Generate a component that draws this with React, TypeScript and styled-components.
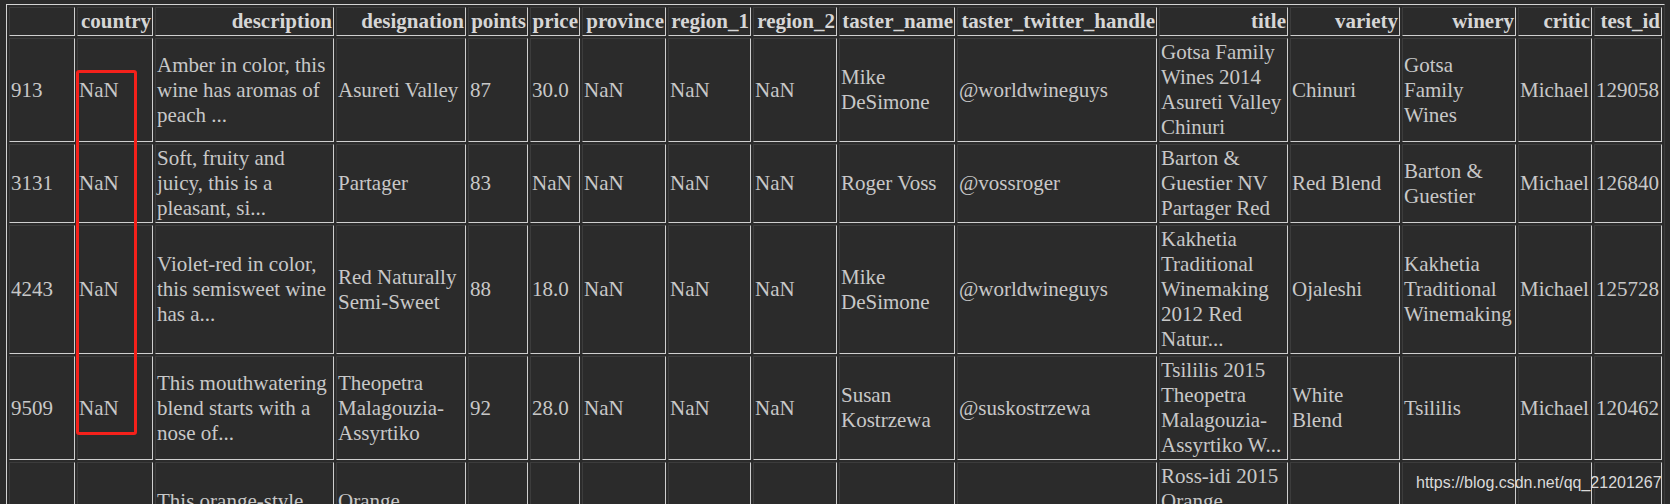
import React from 'react'
import styled, { createGlobalStyle } from 'styled-components'

const GlobalStyle = createGlobalStyle`
  html, body {
    margin: 0;
    background: #2b2b2b;
  }
`

const Frame = styled.div`
  position: relative;
  box-sizing: border-box;
  width: 1670px;
  height: 504px;
  padding: 4px 0 0 6px;
  overflow: hidden;
  background: #2b2b2b;
`

const Table = styled.table`
  width: 1659px;
  table-layout: fixed;
  border-collapse: separate;
  border-spacing: 2px;
  border: 1px solid;
  border-color: #d4d4d4 #3a3a3a #3a3a3a #d4d4d4;
  font-family: 'Liberation Serif', 'Times New Roman', serif;
  font-size: 21px;
  line-height: 25px;
  color: #c8c8c8;
`

const cellBorder = `
  padding: 1px;
  border: 1px solid;
  border-color: #3c3c3c #cfcfcf #cfcfcf #3c3c3c;
  vertical-align: middle;
  overflow: hidden;
`

const HeadCell = styled.th<{ $w: number }>`
  ${cellBorder}
  width: ${(p) => p.$w}px;
  text-align: right;
  font-weight: bold;
  color: #d6d6d6;
  white-space: nowrap;
`

const IndexCell = styled.th`
  ${cellBorder}
  text-align: left;
  font-weight: normal;
`

const Cell = styled.td`
  ${cellBorder}
  text-align: left;
`

// hand-drawn annotation over the country column
const Marker = styled.div`
  position: absolute;
  left: 76px;
  top: 70px;
  width: 61px;
  height: 365px;
  box-sizing: border-box;
  border: 3px solid #f5211b;
  border-radius: 3px;
`

const Watermark = styled.div`
  position: absolute;
  left: 1416px;
  top: 474px;
  font-family: 'Liberation Sans', Arial, sans-serif;
  font-size: 16px;
  line-height: 18px;
  color: #dadada;
  white-space: nowrap;
`

const columns: [string, number][] = [
  ['', 62],
  ['country', 72],
  ['description', 175],
  ['designation', 126],
  ['points', 56],
  ['price', 46],
  ['province', 80],
  ['region_1', 79],
  ['region_2', 80],
  ['taster_name', 112],
  ['taster_twitter_handle', 196],
  ['title', 125],
  ['variety', 106],
  ['winery', 110],
  ['critic', 70],
  ['test_id', 64],
]

const rows: string[][] = [
  [
    '913', 'NaN', 'Amber in color, this wine has aromas of peach ...', 'Asureti Valley', '87', '30.0',
    'NaN', 'NaN', 'NaN', 'Mike DeSimone', '@worldwineguys',
    'Gotsa Family Wines 2014 Asureti Valley Chinuri', 'Chinuri', 'Gotsa Family Wines', 'Michael', '129058',
  ],
  [
    '3131', 'NaN', 'Soft, fruity and juicy, this is a pleasant, si...', 'Partager', '83', 'NaN',
    'NaN', 'NaN', 'NaN', 'Roger Voss', '@vossroger',
    'Barton & Guestier NV Partager Red', 'Red Blend', 'Barton & Guestier', 'Michael', '126840',
  ],
  [
    '4243', 'NaN', 'Violet-red in color, this semisweet wine has a...', 'Red Naturally Semi-Sweet', '88', '18.0',
    'NaN', 'NaN', 'NaN', 'Mike DeSimone', '@worldwineguys',
    'Kakhetia Traditional Winemaking 2012 Red Natur...', 'Ojaleshi', 'Kakhetia Traditional Winemaking', 'Michael', '125728',
  ],
  [
    '9509', 'NaN', 'This mouthwatering blend starts with a nose of...', 'Theopetra Malagouzia-Assyrtiko', '92', '28.0',
    'NaN', 'NaN', 'NaN', 'Susan Kostrzewa', '@suskostrzewa',
    'Tsililis 2015 Theopetra Malagouzia-Assyrtiko W...', 'White Blend', 'Tsililis', 'Michael', '120462',
  ],
  [
    '10196', 'NaN', 'This orange-style wine offers aromas of apricot...', 'Orange Rkatsiteli-Mtsvane', '89', '15.0',
    'NaN', 'NaN', 'NaN', 'Mike DeSimone', '@worldwineguys',
    'Ross-idi 2015 Orange Rkatsiteli-Mtsvane (Kakheti...', 'Rkatsiteli', 'Ross-idi', 'Michael', '119372',
  ],
]

const App = () => {
  return (
    <>
      <GlobalStyle />
      <Frame>
        <Table>
          <thead>
            <tr>
              {columns.map(([name, w], i) => (
                <HeadCell key={i} $w={w}>
                  {name}
                </HeadCell>
              ))}
            </tr>
          </thead>
          <tbody>
            {rows.map((row) => (
              <tr key={row[0]}>
                <IndexCell>{row[0]}</IndexCell>
                {row.slice(1).map((value, j) => (
                  <Cell key={j}>{value}</Cell>
                ))}
              </tr>
            ))}
          </tbody>
        </Table>
        <Marker />
        <Watermark>https://blog.csdn.net/qq_21201267</Watermark>
      </Frame>
    </>
  )
}

export default App
